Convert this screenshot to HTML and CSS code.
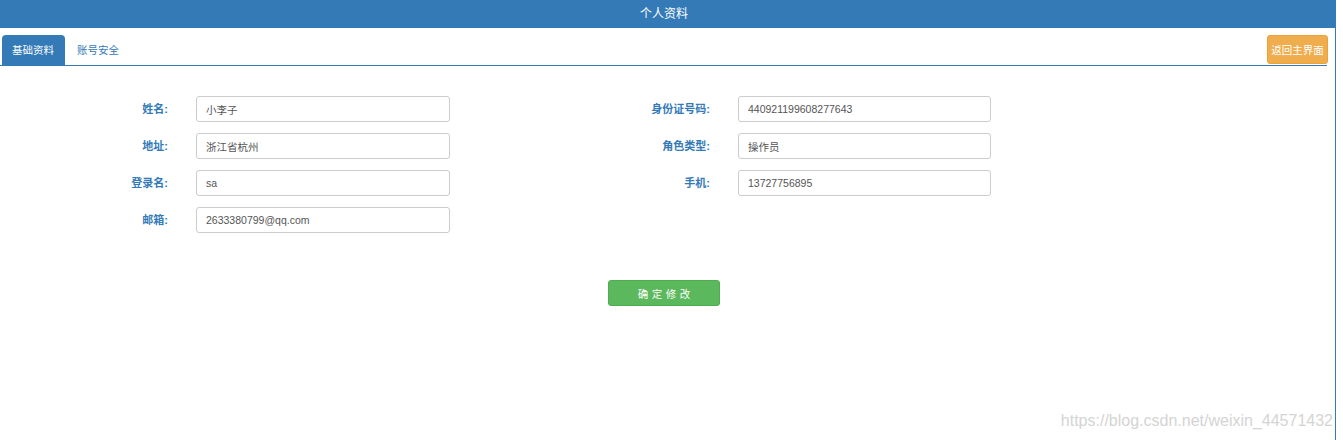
FILE: index.html
```html
<!DOCTYPE html>
<html lang="zh">
<head>
<meta charset="utf-8">
<title>个人资料</title>
<link rel="stylesheet" href="styles.css">
</head>
<body>
<div class="page">
  <div class="header">个人资料</div>
  <div class="tabbar">
    <ul class="tabs">
      <li class="tab active">基础资料</li>
      <li class="tab">账号安全</li>
    </ul>
    <button class="btn-back">返回主界面</button>
  </div>
  <form class="form">
    <div class="grid">
      <label class="lbl">姓名:</label>
      <input class="inp" value="小李子">
      <label class="lbl">身份证号码:</label>
      <input class="inp" value="440921199608277643">

      <label class="lbl">地址:</label>
      <input class="inp" value="浙江省杭州">
      <label class="lbl">角色类型:</label>
      <input class="inp" value="操作员">

      <label class="lbl">登录名:</label>
      <input class="inp" value="sa">
      <label class="lbl">手机:</label>
      <input class="inp" value="13727756895">

      <label class="lbl">邮箱:</label>
      <input class="inp" value="2633380799@qq.com">
    </div>
    <div class="actions">
      <button type="button" class="btn-ok">确定修改</button>
    </div>
  </form>
  <div class="watermark">https://blog.csdn.net/weixin_44571432</div>
</div>
</body>
</html>
```
FILE: styles.css
```css
html, body {
  margin: 0;
  padding: 0;
  background: #fff;
  font-family: "Liberation Sans", Arial, "Noto Sans CJK SC", sans-serif;
  font-size: 10.5px;
}
.page {
  width: 1335px;
  height: 440px;
  border-right: 1px solid #337ab7;
  position: relative;
  box-sizing: content-box;
}
.header {
  height: 28px;
  line-height: 28px;
  background: #337ab7;
  color: #fff;
  text-align: center;
  font-size: 12px;
  padding-right: 7px;
}
.tabbar {
  display: flex;
  align-items: flex-start;
  justify-content: space-between;
  margin-top: 7px;
  margin-right: 8px;
  border-bottom: 1px solid #337ab7;
  height: 30px;
}
.tabs {
  list-style: none;
  margin: 0;
  padding: 0 0 0 2px;
  display: flex;
}
.tab {
  height: 30px;
  line-height: 30px;
  padding: 0 12px;
  color: #337ab7;
  font-size: 10.5px;
}
.tab.active {
  background: #337ab7;
  color: #fff;
  border-radius: 4px 4px 0 0;
  padding: 0 11px 0 10px;
}
.btn-back {
  height: 29px;
  width: 61px;
  padding: 0;
  border: 1px solid #eea236;
  background: #f0ad4e;
  color: #fff;
  border-radius: 3px;
  font-family: inherit;
  font-size: 10.5px;
  white-space: nowrap;
  margin-right: -1px;
}
.form {
  margin: 0;
  padding-top: 30px;
}
.grid {
  display: grid;
  grid-template-columns: 108px 254px 232px 253px;
  column-gap: 28px;
  row-gap: 11px;
  margin-left: 60px;
}
.lbl {
  text-align: right;
  font-weight: bold;
  color: #337ab7;
  line-height: 26px;
  font-size: 11px;
}
.inp {
  box-sizing: border-box;
  height: 26px;
  border: 1px solid #ccc;
  border-radius: 3px;
  padding: 0 9px;
  font-family: inherit;
  font-size: 10.5px;
  color: #555;
  outline: none;
}
.actions {
  display: flex;
  justify-content: center;
  margin-top: 47px;
  padding-right: 7px;
}
.btn-ok {
  width: 112px;
  height: 26px;
  background: #5cb85c;
  border: 1px solid #4cae4c;
  border-radius: 3px;
  color: #fff;
  font-family: inherit;
  font-size: 10.5px;
  letter-spacing: 3.5px;
  padding: 0 0 0 3.5px;
}
.watermark {
  position: absolute;
  right: 2px;
  top: 412px;
  color: #d4d4d4;
  font-size: 16px;
  font-family: "Liberation Sans", Arial, sans-serif;
}
```
